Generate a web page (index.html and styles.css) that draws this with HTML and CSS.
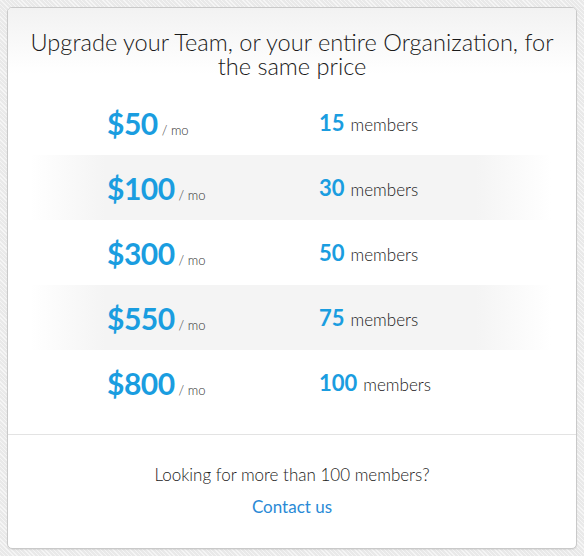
FILE: index.html
```html
<!DOCTYPE html>
<html>
<head>
<meta charset="utf-8">
<link rel="stylesheet" href="styles.css">
</head>
<body>
<div class="card">
  <div class="head">
    <h1 class="title">Upgrade your Team, or your entire Organization, for the same price</h1>
  </div>
  <div class="plans">
    <div class="plan"><div class="price"><span class="amt">$50</span><span class="per">/ mo</span></div><div class="members"><span class="num">15</span><span class="lbl">members</span></div></div>
    <div class="plan alt"><div class="price"><span class="amt">$100</span><span class="per">/ mo</span></div><div class="members"><span class="num">30</span><span class="lbl">members</span></div></div>
    <div class="plan"><div class="price"><span class="amt">$300</span><span class="per">/ mo</span></div><div class="members"><span class="num">50</span><span class="lbl">members</span></div></div>
    <div class="plan alt"><div class="price"><span class="amt">$550</span><span class="per">/ mo</span></div><div class="members"><span class="num">75</span><span class="lbl">members</span></div></div>
    <div class="plan"><div class="price"><span class="amt">$800</span><span class="per">/ mo</span></div><div class="members"><span class="num">100</span><span class="lbl">members</span></div></div>
  </div>
  <div class="foot">
    <p class="more">Looking for more than 100 members?</p>
    <a class="contact" href="#">Contact us</a>
  </div>
</div>
</body>
</html>
```
FILE: styles.css
```css
html, body { height: 100%; }
body {
  margin: 0;
  padding: 7px;
  box-sizing: border-box;
  font-family: "Lato", "Open Sans", sans-serif;
  background-color: #efefef;
  background-image: repeating-linear-gradient(45deg, #f5f5f5 0 1px, #e9e9e9 1px 3px);
}
.card {
  width: 570px;
  height: 542px;
  box-sizing: border-box;
  border: 1px solid #c9c9c9;
  border-radius: 5px;
  background: #fff;
  box-shadow: 0 1px 1px rgba(0,0,0,0.08);
  display: flex;
  flex-direction: column;
  overflow: hidden;
}
.head {
  height: 82px;
  background: linear-gradient(#f2f2f2, #ffffff 80%);
  display: flex;
  justify-content: center;
  padding-top: 22px;
  box-sizing: border-box;
}
.title {
  margin: 0;
  font-weight: 300;
  font-size: 23.6px;
  line-height: 24px;
  color: #1a1a1a;
  text-align: center;
  width: 540px;
}
.plans {
  padding: 0 25px 19px 22px;
  border-bottom: 1px solid #e3e3e3;
}
.plan {
  height: 65px;
  display: grid;
  grid-template-columns: 212px 1fr;
  align-items: center;
  padding-left: 77px;
}
.plan.alt {
  background: linear-gradient(90deg, #ffffff 0, #f4f4f4 75px, #f4f4f4 calc(100% - 75px), #ffffff 100%);
}
.price, .members {
  display: flex;
  align-items: baseline;
}
.amt {
  font-size: 30px;
  font-weight: 700;
  color: #1a9de0;
  letter-spacing: -0.5px;
}
.per {
  font-size: 13px;
  color: #333;
  margin-left: 4px;
  font-weight: 300;
}
.num {
  font-size: 22px;
  font-weight: 700;
  color: #1a9de0;
}
.lbl {
  font-size: 17px;
  color: #1a1a1a;
  margin-left: 6px;
  font-weight: 300;
}
.foot {
  flex: 1;
  display: flex;
  flex-direction: column;
  align-items: center;
  padding-top: 28px;
}
.more {
  margin: 0;
  font-size: 17px;
  line-height: 24px;
  color: #1a1a1a;
  font-weight: 300;
}
.contact {
  margin-top: 8px;
  font-size: 17px;
  line-height: 24px;
  color: #2a8ad6;
  text-decoration: none;
}
```
